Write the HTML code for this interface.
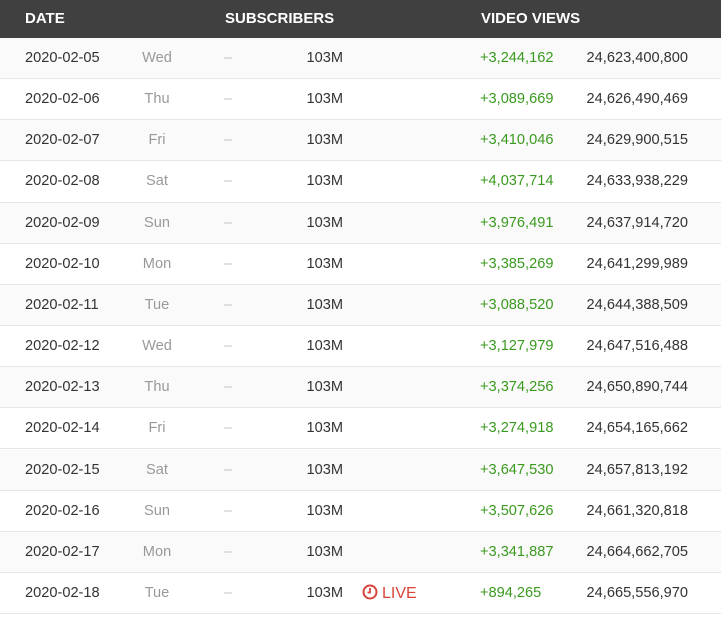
<!DOCTYPE html>
<html><head><meta charset="utf-8"><style>
*{margin:0;padding:0;box-sizing:border-box}
body{width:721px;height:617px;background:#fff;font-family:"Liberation Sans",sans-serif;font-size:14.6px;color:#333;position:relative;overflow:hidden}
.hd{position:absolute;left:0;top:0;width:721px;height:38px;background:#404040;color:#fff;font-weight:bold;font-size:15px}
.hd span{position:absolute;top:10px}
.r{position:absolute;left:0;width:721px;height:41.15px;border-bottom:1px solid #e6e6e6;background:#fafafa}
.r span{position:absolute;top:12px;white-space:nowrap}
.d{left:25px}
.w{left:127px;width:60px;text-align:center;color:#999}
.m{left:224px;color:#c4c4c4}
.s{right:378px}
.g{left:480px;color:#3a9a1f}
.t{right:33px}
.l{left:362px;color:#d9443a;font-size:16px;top:11px!important}
</style></head><body>
<div class="hd"><span style="left:25px">DATE</span><span style="left:225px">SUBSCRIBERS</span><span style="left:481px">VIDEO VIEWS</span></div>
<div id="rows"></div>
<script>
var data=[["2020-02-05","Wed","+3,244,162","24,623,400,800"],["2020-02-06","Thu","+3,089,669","24,626,490,469"],["2020-02-07","Fri","+3,410,046","24,629,900,515"],["2020-02-08","Sat","+4,037,714","24,633,938,229"],["2020-02-09","Sun","+3,976,491","24,637,914,720"],["2020-02-10","Mon","+3,385,269","24,641,299,989"],["2020-02-11","Tue","+3,088,520","24,644,388,509"],["2020-02-12","Wed","+3,127,979","24,647,516,488"],["2020-02-13","Thu","+3,374,256","24,650,890,744"],["2020-02-14","Fri","+3,274,918","24,654,165,662"],["2020-02-15","Sat","+3,647,530","24,657,813,192"],["2020-02-16","Sun","+3,507,626","24,661,320,818"],["2020-02-17","Mon","+3,341,887","24,664,662,705"],["2020-02-18","Tue","+894,265","24,665,556,970"]];
var h="";data.forEach(function(r,i){h+='<div class="r" style="top:'+(38+i*41.15)+'px;background:'+(i%2?'#fff':'#fafafa')+'"><span class="d">'+r[0]+'</span><span class="w">'+r[1]+'</span><span class="m">–</span><span class="s">103M</span>'+(i==13?'<span class="l"><svg width="16" height="16" viewBox="0 0 16 16" style="vertical-align:-2px;margin-right:4px"><circle cx="8" cy="8" r="6.5" fill="none" stroke="#d9443a" stroke-width="2"/><path d="M8 4v4.5H5.5" fill="none" stroke="#d9443a" stroke-width="1.8"/></svg>LIVE</span>':'')+'<span class="g">'+r[2]+'</span><span class="t">'+r[3]+'</span></div>';});
document.getElementById("rows").innerHTML=h;
</script>
</body></html>
